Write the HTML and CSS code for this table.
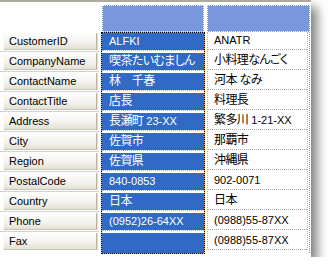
FILE: index.html
```html
<!DOCTYPE html>
<html>
<head>
<meta charset="utf-8">
<link rel="stylesheet" href="styles.css">
</head>
<body>
<div class="panel">
  <div class="labels">
    <div class="corner"></div>
    <div class="lab"><div class="btn">CustomerID</div></div>
    <div class="lab"><div class="btn">CompanyName</div></div>
    <div class="lab"><div class="btn">ContactName</div></div>
    <div class="lab"><div class="btn">ContactTitle</div></div>
    <div class="lab"><div class="btn">Address</div></div>
    <div class="lab"><div class="btn">City</div></div>
    <div class="lab"><div class="btn">Region</div></div>
    <div class="lab"><div class="btn">PostalCode</div></div>
    <div class="lab"><div class="btn">Country</div></div>
    <div class="lab"><div class="btn">Phone</div></div>
    <div class="lab last"><div class="btn">Fax</div></div>
  </div>
  <div class="col col1">
    <div class="head"></div>
    <div class="focus">
      <div class="cells">
        <div class="cell">ALFKI</div>
        <div class="cell"><span class="j">喫茶たいむましん</span></div>
        <div class="cell"><span class="j">林　千春</span></div>
        <div class="cell"><span class="j">店長</span></div>
        <div class="cell"><span class="j">長瀬町</span> 23-XX</div>
        <div class="cell"><span class="j">佐賀市</span></div>
        <div class="cell"><span class="j">佐賀県</span></div>
        <div class="cell">840-0853</div>
        <div class="cell"><span class="j">日本</span></div>
        <div class="cell">(0952)26-64XX</div>
        <div class="cell last"></div>
      </div>
    </div>
  </div>
  <div class="col col2">
    <div class="head"></div>
    <div class="frame">
      <div class="cells">
        <div class="cell">ANATR</div>
        <div class="cell"><span class="j">小料理なんごく</span></div>
        <div class="cell"><span class="j">河本 なみ</span></div>
        <div class="cell"><span class="j">料理長</span></div>
        <div class="cell"><span class="j">繁多川</span> 1-21-XX</div>
        <div class="cell"><span class="j">那覇市</span></div>
        <div class="cell"><span class="j">沖縄県</span></div>
        <div class="cell">902-0071</div>
        <div class="cell"><span class="j">日本</span></div>
        <div class="cell">(0988)55-87XX</div>
        <div class="cell">(0988)55-87XX</div>
      </div>
    </div>
  </div>
</div>
</body>
</html>
```

FILE: styles.css
```css
html, body {
  margin: 0;
  background: #ffffff;
}
body {
  font-family: "Liberation Sans", "Noto Sans CJK JP", sans-serif;
  font-size: 11px;
  color: #000;
}
.panel {
  width: 311px;
  height: 252px;
  border-top: 2px solid #aeab9e;
  padding-top: 3px;
  box-sizing: content-box;
  background: #fff;
  box-shadow: 6px 7px 10px rgba(0, 0, 0, 0.5);
  display: flex;
  align-items: flex-start;
}
.j {
  font-size: 12px;
  letter-spacing: -0.6px;
  font-feature-settings: "palt";
}

/* row labels */
.labels {
  width: 99px;
  flex: none;
}
.corner {
  height: 27px;
}
.lab {
  height: 20px;
  box-sizing: border-box;
  padding-top: 1px;
  border-bottom: 1px solid #cfd2da;
}
.lab.last {
  border-bottom: none;
}
.btn {
  margin-left: 3px;
  width: 94px;
  height: 17px;
  box-sizing: border-box;
  padding-left: 5px;
  line-height: 16px;
  border-left: 1px solid #fbfbf8;
  border-right: 1px solid #b9b5a5;
  border-bottom: 1px solid #c9c5b6;
  box-shadow: 1px 0 0 #dedbcf;
  background: linear-gradient(#fefefd, #f4f3ee 55%, #e4e1d4);
  white-space: nowrap;
}

/* columns */
.col {
  flex: none;
  margin-left: 2px;
}
.col1 {
  width: 104px;
}
.col2 {
  width: 103px;
}
.head {
  height: 27px;
  box-sizing: border-box;
  background: #7a97dc;
  border: 1px dotted #ffffff;
}
.col1 .head {
  margin: 0 1px;
}
.focus {
  border: 1px dotted #000;
  background: #e8a040;
}
.col1 .cells {
  background: #fff;
}
.cell {
  height: 17px;
  line-height: 17px;
  margin-bottom: 2px;
  border-bottom: 1px dotted #a9a9a9;
  background-clip: padding-box;
  padding-left: 7px;
  white-space: nowrap;
  overflow: hidden;
}
.col1 .cell {
  background-color: #316ac5;
  color: #fff;
  border-bottom-color: #9fb2d8;
}
.col1 .cell.last {
  height: 20px;
  margin-bottom: 0;
  border-bottom: none;
}
.frame {
  border-right: 1px dotted #7d95dc;
  height: 221px;
}
.col2 .cells {
  border-left: 1px dotted #b4b4b4;
  border-right: 1px dotted #b4b4b4;
  margin-right: 1px;
}
.col2 .cell {
  padding-left: 6px;
}
```
